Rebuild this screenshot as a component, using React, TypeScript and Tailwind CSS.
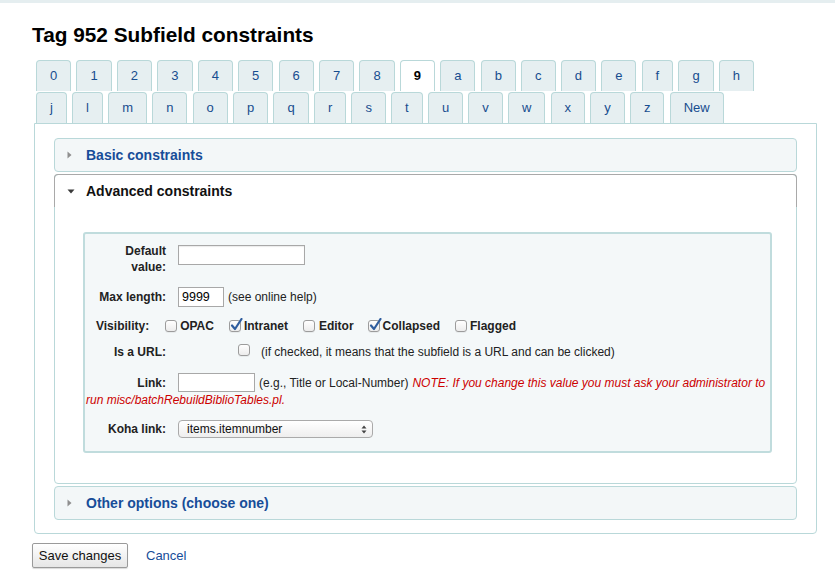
import React from "react";

const row1 = ["0", "1", "2", "3", "4", "5", "6", "7", "8", "9", "a", "b", "c", "d", "e", "f", "g", "h"];
const row2 = ["j", "l", "m", "n", "o", "p", "q", "r", "s", "t", "u", "v", "w", "x", "y", "z", "New"];

const Tab: React.FC<{ label: string; active?: boolean }> = ({ label, active }) => (
  <div
    className={
      active
        ? "h-[31px] px-[13px] flex items-center rounded-t-[4px] border border-b-0 border-[#b9d8d9] bg-white text-[13px] font-bold text-black"
        : "h-[31px] px-[13px] flex items-center rounded-t-[4px] border border-b-0 border-[#b9d8d9] bg-[#e6eff1] text-[13px] text-[#174d8f]"
    }
  >
    {label}
  </div>
);

const Checkbox: React.FC<{ checked?: boolean }> = ({ checked }) => (
  <span className="relative inline-block w-[12px] h-[12px] shrink-0 rounded-[3px] border border-[#9c9c9c] bg-gradient-to-b from-white to-[#ececec] shadow-[0_1px_0_rgba(0,0,0,0.05)]">
    {checked && (
      <svg className="absolute left-[0px] top-[-3px]" width="13" height="14" viewBox="0 0 13 14">
        <path d="M2 7.5 L5 11 L11.5 1" fill="none" stroke="#2f5d9e" strokeWidth="2.2" strokeLinecap="round" strokeLinejoin="round" />
      </svg>
    )}
  </span>
);

const RightTri = () => (
  <svg width="5" height="8" viewBox="0 0 5 8" className="shrink-0">
    <path d="M0.5 0.5 L4.5 4 L0.5 7.5 Z" fill="#8f8f8f" />
  </svg>
);

const DownTri = () => (
  <svg width="8" height="5" viewBox="0 0 8 5" className="shrink-0">
    <path d="M0.5 0.5 L7.5 0.5 L4 4.5 Z" fill="#3a3a3a" />
  </svg>
);

const Label: React.FC<{ children: React.ReactNode }> = ({ children }) => (
  <div className="w-[70px] mr-[12px] text-right font-bold leading-[16px] text-[#222]">{children}</div>
);

export default function App() {
  return (
    <div className="min-h-screen bg-white font-['Liberation_Sans',Arial,sans-serif] text-black">
      <div className="h-[3px] bg-[#e5eef0]" />
      <div className="pl-[32px]">
        <h1 className="mt-[20px] text-[20.8px] leading-[24px] font-bold">Tag 952 Subfield constraints</h1>

        <div className="mt-[13px] ml-[4px] flex flex-col gap-px">
          <div className="flex gap-[5.2px]">
            {row1.map((t) => (
              <Tab key={t} label={t} active={t === "9"} />
            ))}
          </div>
          <div className="flex gap-[5.2px]">
            {row2.map((t) => (
              <Tab key={t} label={t} />
            ))}
          </div>
        </div>

        <div className="ml-[2px] w-[783px] border border-[#b9d8d9] rounded-b-[4px] pt-[14px] pb-[13px] px-[19px] flex flex-col gap-[2px]">
          <div className="h-[34px] rounded-[4px] border border-[#b9d8d9] bg-[#f3f7f8] flex items-center pl-[12px] gap-[14px]">
            <RightTri />
            <span className="text-[14px] font-bold text-[#174d99]">Basic constraints</span>
          </div>

          <div className="rounded-[4px] border border-[#b9d8d9] pb-[30px]">
            <div className="-mx-px -mt-px h-[33px] rounded-t-[4px] border border-b-0 border-[#a9a9a9] flex items-center pl-[12px] gap-[11px]">
              <DownTri />
              <span className="text-[14px] font-bold text-[#111]">Advanced constraints</span>
            </div>

            <div className="mt-[25px] ml-[28px] w-[689px] rounded-[3px] border-2 border-[#c0dcdd] bg-[#f4f8f9] pt-[9px] pb-[13px] text-[12px]">
              <div className="flex items-start pl-[11px]">
                <Label>
                  Default
                  <br />
                  value:
                </Label>
                <div className="mt-[2px] w-[127px] h-[20px] border border-[#a8a8a8] bg-white shadow-[inset_0_1px_1px_rgba(0,0,0,0.08)]" />
              </div>

              <div className="mt-[12px] flex items-center h-[20px] pl-[11px]">
                <Label>Max length:</Label>
                <div className="w-[46px] h-[20px] border border-[#a8a8a8] bg-white flex items-center pl-[3px] text-[12.5px]">
                  9999
                </div>
                <span className="ml-[4px] text-[#222]">(see online help)</span>
              </div>

              <div className="mt-[9px] flex items-center h-[20px] pl-[11px] font-bold text-[#222]">
                <span className="mr-[16px]">Visibility:</span>
                <Checkbox />
                <span className="ml-[3px] mr-[15px]">OPAC</span>
                <Checkbox checked />
                <span className="ml-[3px] mr-[15px]">Intranet</span>
                <Checkbox />
                <span className="ml-[4px] mr-[14px]">Editor</span>
                <Checkbox checked />
                <span className="ml-[3px] mr-[15px]">Collapsed</span>
                <Checkbox />
                <span className="ml-[3px]">Flagged</span>
              </div>

              <div className="mt-[6px] flex items-center h-[20px] pl-[11px]">
                <Label>Is a URL:</Label>
                <span className="ml-[60px]">
                  <Checkbox />
                </span>
                <span className="ml-[11px] text-[#222]">
                  (if checked, it means that the subfield is a URL and can be clicked)
                </span>
              </div>

              <div className="mt-[11px] flex items-center h-[19px] pl-[11px]">
                <Label>Link:</Label>
                <div className="w-[77px] h-[19px] border border-[#a8a8a8] bg-white" />
                <span className="ml-[4px] text-[#222]">(e.g., Title or Local-Number)</span>
                <span className="ml-[4px] italic text-[#cc0000]">
                  NOTE: If you change this value you must ask your administrator to
                </span>
              </div>
              <div className="pl-[1px] leading-[16px] italic text-[#cc0000]">run misc/batchRebuildBiblioTables.pl.</div>

              <div className="mt-[12px] flex items-center h-[18px] pl-[11px]">
                <Label>Koha link:</Label>
                <div className="w-[195px] h-[18px] rounded-[4px] border border-[#aaaaaa] bg-gradient-to-b from-white to-[#eeeeee] flex items-center pl-[8px] pr-[5px] text-[12px] text-[#111]">
                  <span className="flex-1">items.itemnumber</span>
                  <svg width="6" height="9" viewBox="0 0 6 9">
                    <path d="M0.5 3.5 L3 0.5 L5.5 3.5 Z M0.5 5.5 L3 8.5 L5.5 5.5 Z" fill="#444" />
                  </svg>
                </div>
              </div>
            </div>
          </div>

          <div className="h-[34px] rounded-[4px] border border-[#b9d8d9] bg-[#f3f7f8] flex items-center pl-[12px] gap-[14px]">
            <RightTri />
            <span className="text-[14px] font-bold text-[#174d99]">Other options (choose one)</span>
          </div>
        </div>

        <div className="mt-[9px] flex items-center">
          <button className="w-[96px] h-[25px] rounded-[2px] border border-[#9a9a9a] bg-gradient-to-b from-white to-[#e6e6e6] shadow-[0_1px_1px_rgba(0,0,0,0.15)] text-[13px] text-[#111]">
            Save changes
          </button>
          <a className="ml-[18px] text-[13px] text-[#174d99]" href="#">
            Cancel
          </a>
        </div>
      </div>
    </div>
  );
}
